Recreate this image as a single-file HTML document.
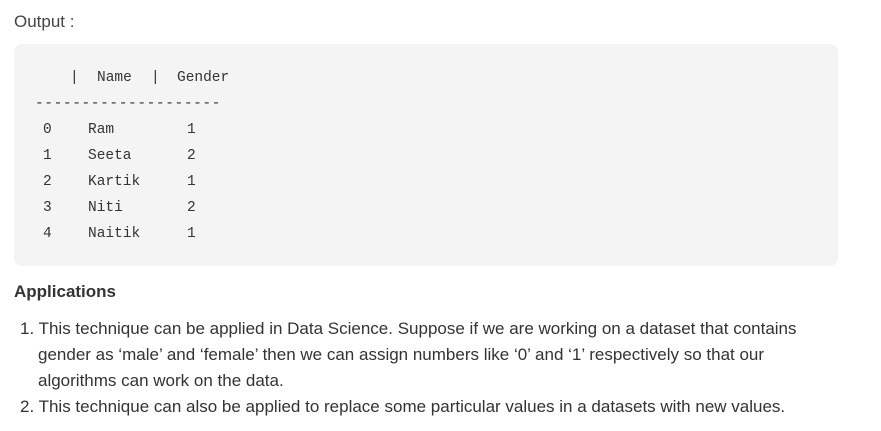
<!DOCTYPE html>
<html><head><style>
body{margin:0;width:881px;height:431px;background:#fff;font-family:"Liberation Sans",sans-serif;color:#333;position:relative;overflow:hidden}
.t{position:absolute;white-space:pre;font-size:17px;line-height:20px}
.box{position:absolute;left:14px;top:44px;width:824px;height:222px;background:#f4f4f5;border-radius:8px}
.m{position:absolute;white-space:pre;font-family:"Liberation Mono",monospace;font-size:14.5px;color:#333;line-height:18px}
</style></head><body>
<div class="t" style="left:14px;top:12px;color:#444">Output :</div>
<div class="box"></div>
<div class="m" style="left:70px;top:69px">|</div>
<div class="m" style="left:97px;top:69px">Name</div>
<div class="m" style="left:151px;top:69px">|</div>
<div class="m" style="left:177px;top:69px">Gender</div>
<div class="m" style="left:35px;top:95px;letter-spacing:0.6px">--------------------</div>
<div class="m" style="left:43px;top:121px">0</div><div class="m" style="left:88px;top:121px">Ram</div><div class="m" style="left:187px;top:121px">1</div>
<div class="m" style="left:43px;top:147px">1</div><div class="m" style="left:88px;top:147px">Seeta</div><div class="m" style="left:187px;top:147px">2</div>
<div class="m" style="left:43px;top:173px">2</div><div class="m" style="left:88px;top:173px">Kartik</div><div class="m" style="left:187px;top:173px">1</div>
<div class="m" style="left:43px;top:199px">3</div><div class="m" style="left:88px;top:199px">Niti</div><div class="m" style="left:187px;top:199px">2</div>
<div class="m" style="left:43px;top:225px">4</div><div class="m" style="left:88px;top:225px">Naitik</div><div class="m" style="left:187px;top:225px">1</div>
<div class="t" style="left:14px;top:282px;font-weight:bold">Applications</div>
<div class="t" style="left:20px;top:319px">1. This technique can be applied in Data Science. Suppose if we are working on a dataset that contains</div>
<div class="t" style="left:38px;top:345px">gender as ‘male’ and ‘female’ then we can assign numbers like ‘0’ and ‘1’ respectively so that our</div>
<div class="t" style="left:38px;top:371px">algorithms can work on the data.</div>
<div class="t" style="left:20px;top:397px">2. This technique can also be applied to replace some particular values in a datasets with new values.</div>
</body></html>
